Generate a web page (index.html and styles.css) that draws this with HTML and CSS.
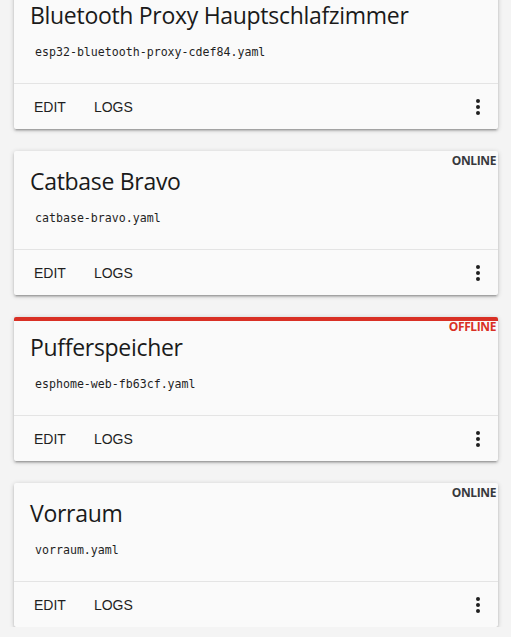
FILE: index.html
```html
<!DOCTYPE html>
<html lang="de">
<head>
<meta charset="utf-8">
<title>ESPHome</title>
<link rel="stylesheet" href="styles.css">
</head>
<body>
<main class="list">
  <section class="card online">
    <div class="content">
      <div class="title">Bluetooth Proxy Hauptschlafzimmer</div>
      <div class="file"><code>esp32-bluetooth-proxy-cdef84.yaml</code></div>
    </div>
    <div class="actions">
      <span class="act">Edit</span>
      <span class="act">Logs</span>
      <svg class="more" viewBox="0 0 24 24" width="24" height="24"><circle cx="12" cy="6" r="2"/><circle cx="12" cy="12" r="2"/><circle cx="12" cy="18" r="2"/></svg>
    </div>
  </section>
  <section class="card online">
    <div class="status">ONLINE</div>
    <div class="content">
      <div class="title">Catbase Bravo</div>
      <div class="file"><code>catbase-bravo.yaml</code></div>
    </div>
    <div class="actions">
      <span class="act">Edit</span>
      <span class="act">Logs</span>
      <svg class="more" viewBox="0 0 24 24" width="24" height="24"><circle cx="12" cy="6" r="2"/><circle cx="12" cy="12" r="2"/><circle cx="12" cy="18" r="2"/></svg>
    </div>
  </section>
  <section class="card offline">
    <div class="status">OFFLINE</div>
    <div class="content">
      <div class="title">Pufferspeicher</div>
      <div class="file"><code>esphome-web-fb63cf.yaml</code></div>
    </div>
    <div class="actions">
      <span class="act">Edit</span>
      <span class="act">Logs</span>
      <svg class="more" viewBox="0 0 24 24" width="24" height="24"><circle cx="12" cy="6" r="2"/><circle cx="12" cy="12" r="2"/><circle cx="12" cy="18" r="2"/></svg>
    </div>
  </section>
  <section class="card online">
    <div class="status">ONLINE</div>
    <div class="content">
      <div class="title">Vorraum</div>
      <div class="file"><code>vorraum.yaml</code></div>
    </div>
    <div class="actions">
      <span class="act">Edit</span>
      <span class="act">Logs</span>
      <svg class="more" viewBox="0 0 24 24" width="24" height="24"><circle cx="12" cy="6" r="2"/><circle cx="12" cy="12" r="2"/><circle cx="12" cy="18" r="2"/></svg>
    </div>
  </section>
</main>
</body>
</html>
```

FILE: styles.css
```css
html, body {
  margin: 0;
  padding: 0;
  background: #f4f4f4;
  font-family: "Open Sans", "Noto Sans", sans-serif;
  color: #212121;
}

.list {
  display: flex;
  flex-direction: column;
  gap: 22px;
  margin: -15px 13px 0 14px;
}

.card {
  position: relative;
  background: #fafafa;
  border-top: 4px solid transparent;
  border-radius: 2px;
  box-shadow: 0 2px 2px 0 rgba(0,0,0,.14), 0 3px 1px -2px rgba(0,0,0,.12), 0 1px 5px 0 rgba(0,0,0,.2);
  height: 144px;
  box-sizing: border-box;
  display: flex;
  flex-direction: column;
}

.card.offline {
  border-top-color: #d93025;
}

.status {
  position: absolute;
  top: 0;
  right: 2px;
  font-family: "Open Sans", sans-serif;
  font-weight: 700;
  font-size: 12px;
  line-height: 12px;
  letter-spacing: -0.4px;
  color: #37393d;
}

.offline .status {
  color: #d93025;
}

.content {
  height: 95px;
  box-sizing: border-box;
  padding: 10px 16px 0 16px;
  border-bottom: 1px solid #e4e4e4;
}

.title {
  font-size: 23px;
  line-height: 32px;
  font-weight: 400;
  letter-spacing: -0.3px;
  color: #1a1a1a;
}

.file {
  margin-top: 8px;
  padding-left: 5px;
}

.file code {
  font-family: "DejaVu Sans Mono", monospace;
  font-size: 11.6px;
  color: #1f1f1f;
}

.actions {
  flex: 1;
  display: flex;
  align-items: center;
  padding: 0 8px 0 20px;
  gap: 28px;
}

.act {
  font-family: "Liberation Sans", Arial, sans-serif;
  font-size: 14px;
  text-transform: uppercase;
  color: #1f1f1f;
}

.more {
  margin-left: auto;
  fill: #1f1f1f;
}
```
